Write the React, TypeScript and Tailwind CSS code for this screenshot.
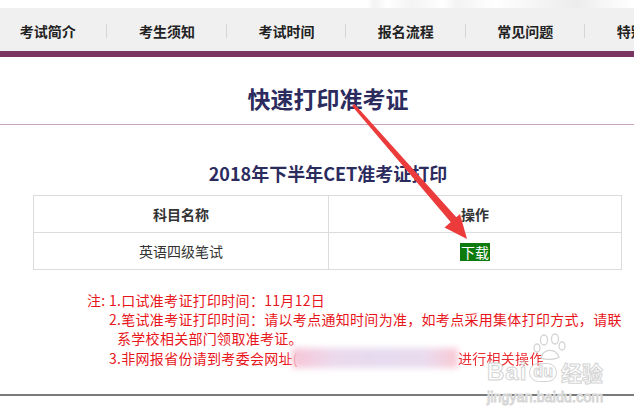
import React from 'react';

const navItems = ['考试简介', '考生须知', '考试时间', '报名流程', '常见问题', '特别提醒'];

const font = { fontFamily: '"Noto Sans CJK SC", "Noto Sans", sans-serif' };

const Arrow = () => (
  <svg className="absolute left-0 top-0 pointer-events-none" width="634" height="408" viewBox="0 0 634 408">
    <polygon points="352,106 354.5,104 457,218 451.5,223" fill="#ec3b3b" />
    <polygon points="467,239 444.5,227.5 460,214" fill="#ec3b3b" />
  </svg>
);

// baidu jingyan watermark in the corner
const Watermark = () => (
  <div className="absolute inset-0 pointer-events-none select-none text-white [-webkit-text-stroke:1px_#d4d4d4]">
    <svg className="absolute left-[532px] top-[332px]" width="36" height="28" viewBox="0 0 36 28">
      <g fill="#fff" stroke="#d4d4d4" strokeWidth="1.3">
        <ellipse cx="12" cy="8" rx="3.5" ry="5" />
        <ellipse cx="23" cy="7" rx="3.5" ry="5" />
        <ellipse cx="5" cy="16" rx="3" ry="4" />
        <ellipse cx="30" cy="14" rx="3" ry="4" />
        <path d="M9 26 C 11 17, 23 15, 27 25 C 23 28, 13 28, 9 26 Z" />
      </g>
    </svg>
    <div className="absolute left-[487px] top-[360px] flex items-center leading-none" style={{ fontFamily: '"Liberation Sans", Arial, sans-serif' }}>
      <span className="text-[24px] font-bold tracking-[1px]">Bai</span>
      <span className="ml-[2px] rounded-full border-[1.5px] border-[#d4d4d4] px-[3px] pb-[1px] text-[16px] font-bold">du</span>
      <span className="ml-[4px] text-[21px] font-bold" style={font}>经验</span>
    </div>
    <div className="absolute left-[487px] top-[390px] text-[14px] leading-none tracking-[0.2px]" style={{ fontFamily: '"Liberation Sans", Arial, sans-serif' }}>
      jingyan.baidu.com
    </div>
  </div>
);

export default function App() {
  return (
    <div className="relative w-[634px] h-[408px] overflow-hidden bg-white" style={font}>
      <div className="h-[8px] bg-[linear-gradient(90deg,#fff_0%,#fff_58%,#f2f2f2_59%,#fff_61%,#f4f4f4_65%,#fff_70%,#f3f3f3_72%,#fff_78%,#ececec_91%,#f6f6f6_95%,#fff_100%)]" />

      <nav className="h-[43px] bg-[#f0f0f0] overflow-hidden">
        <ul className="flex items-center h-full ml-[-12px]">
          {navItems.map((item, i) => (
            <li key={item} className="relative flex items-center justify-center shrink-0 w-[119.4px] h-full">
              <span className="text-[14px] font-bold text-[#222] leading-none mt-[2px]">{item}</span>
              {i < navItems.length - 1 && (
                <span className="absolute right-0 top-[16px] h-[14px] w-px bg-[#d6d6d6]" />
              )}
            </li>
          ))}
        </ul>
      </nav>

      <div className="h-[6px] bg-[#7a3462]" />

      <div className="pt-[27px] pb-[12px] pl-[22px] border-b border-[#c9a3bf] text-center">
        <h1 className="text-[23px] leading-[28px] font-bold text-[#2b2b5e]">快速打印准考证</h1>
      </div>

      <h2 className="mt-[36px] mb-[10px] pl-[22px] text-center text-[18px] leading-[24px] font-bold text-[#2b2b5e]">
        2018年下半年CET准考证打印
      </h2>

      <table className="ml-[33px] w-[589px] border-collapse text-[14px] text-[#333]">
        <tbody>
          <tr className="h-[37px]">
            <th className="w-[295px] border border-[#dcdcdc] font-bold">科目名称</th>
            <th className="border border-[#dcdcdc] font-bold">操作</th>
          </tr>
          <tr className="h-[37px]">
            <td className="border border-[#dcdcdc] text-center">英语四级笔试</td>
            <td className="border border-[#dcdcdc] text-center">
              <span className="inline-block bg-[#0d7a0d] px-[1px] text-white leading-[18px] mt-[3px]">下载</span>
            </td>
          </tr>
        </tbody>
      </table>

      <div className="mt-[21px] text-[14px] leading-[19px] text-[#e8151b] tracking-[0.3px]">
        <p className="ml-[87px]">注: 1.口试准考证打印时间：11月12日</p>
        <p className="ml-[109px]">2.笔试准考证打印时间：请以考点通知时间为准，如考点采用集体打印方式，请联</p>
        <p className="ml-[117px]">系学校相关部门领取准考证。</p>
        <p className="ml-[109px] flex items-center whitespace-nowrap">
          <span>3.非网报省份请到考委会网址(</span>
          <span className="inline-block -ml-[6px] w-[166px] h-[20px] blur-[3px] bg-[linear-gradient(90deg,#f7c6d6_0%,#ecd9ec_25%,#e6dbef_55%,#eadbee_80%,#f9c9d4_100%)]" />
          <span className="opacity-90">进行相关操作</span>
        </p>
      </div>

      <div className="mt-[26px] h-[2px] bg-[#7a7a7a]" />

      <Watermark />
      <Arrow />
    </div>
  );
}
